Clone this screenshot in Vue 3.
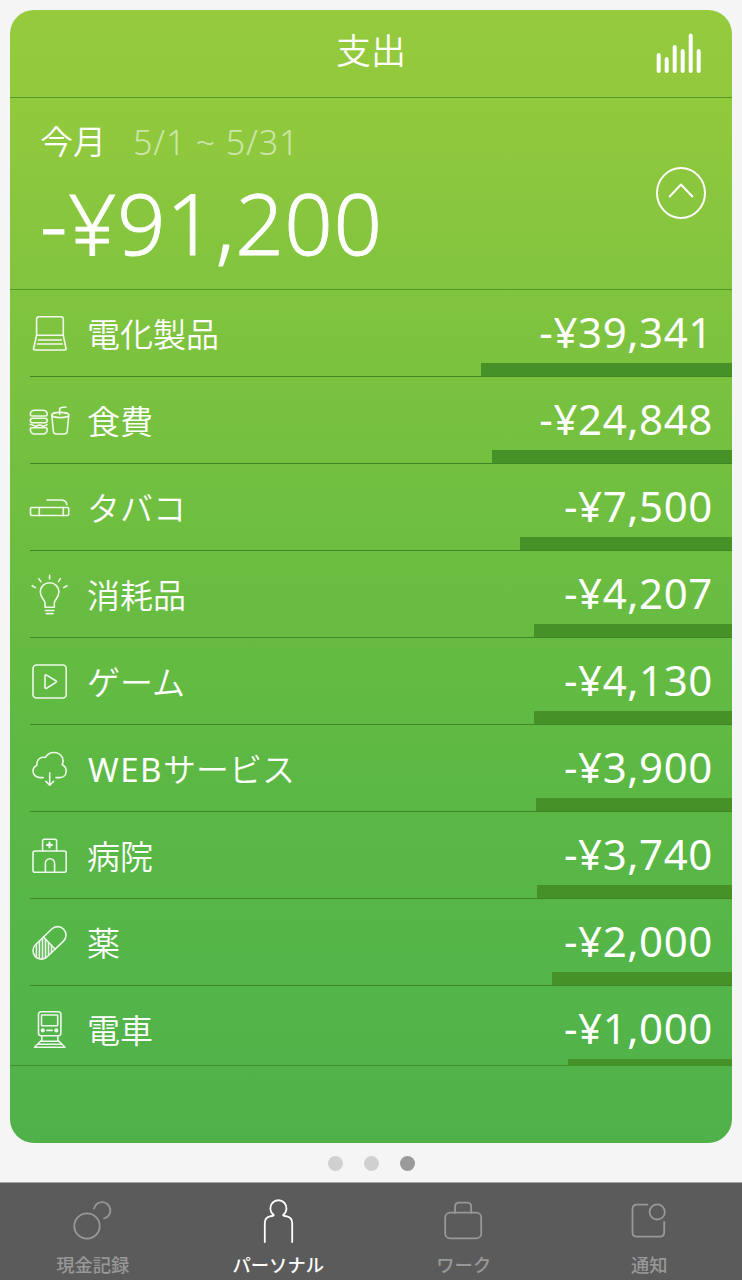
<script setup>
import { ref } from 'vue'

// bar は右端から伸びるバーの長さ(px)
const expenses = [
  { id: 'appliance', name: '電化製品', amount: 39341, bar: 251 },
  { id: 'food', name: '食費', amount: 24848, bar: 240 },
  { id: 'tobacco', name: 'タバコ', amount: 7500, bar: 212 },
  { id: 'supplies', name: '消耗品', amount: 4207, bar: 198 },
  { id: 'game', name: 'ゲーム', amount: 4130, bar: 198 },
  { id: 'web', latin: 'WEB', name: 'サービス', amount: 3900, bar: 196 },
  { id: 'hospital', name: '病院', amount: 3740, bar: 195 },
  { id: 'medicine', name: '薬', amount: 2000, bar: 180 },
  { id: 'train', name: '電車', amount: 1000, bar: 164 }
]

const tabs = [
  { id: 'cash', label: '現金記録' },
  { id: 'personal', label: 'パーソナル' },
  { id: 'work', label: 'ワーク' },
  { id: 'notice', label: '通知' }
]

const activeTab = ref('personal')
const activePage = ref(3)

function formatYen(value) {
  return '-¥' + value.toLocaleString('en-US')
}
</script>

<template>
  <div class="screen">
    <section class="card">
      <header class="card-header">
        <h1>支出</h1>
        <svg class="chart-icon" viewBox="0 0 46 42">
          <path d="M2.7 32V48M10.7 36V48M18.7 24V48M26.7 28V48M34.7 12.5V48M42.7 28V48" transform="translate(0 -10)" />
        </svg>
      </header>

      <div class="summary">
        <div class="summary-main">
          <div class="period">
            <span class="period-name">今月</span>
            <span class="period-range">5/1 ~ 5/31</span>
          </div>
          <div class="total">{{ formatYen(91200) }}</div>
        </div>
        <svg class="toggle-icon" viewBox="0 0 50 54">
          <ellipse cx="25" cy="27" rx="24" ry="25" />
          <path d="M13.7 30.5L25 18.5L36.3 30.5" />
        </svg>
      </div>

      <ul class="expense-list">
        <li v-for="item in expenses" :key="item.id" class="expense-item">
          <svg class="expense-icon" viewBox="0 0 44 44">
            <g v-if="item.id === 'appliance'">
              <path d="M8.6 24.3V8Q8.6 5.7 11 5.7H33Q35.3 5.7 35.3 8V24.3Z" />
              <path d="M8.6 24.3L5.6 37.5Q5.3 39 6.8 39H36.8Q38.3 39 38 37.5L35.3 24.3" />
              <path d="M10.5 29H33.2M9.5 33H34.3" />
            </g>
            <g v-else-if="item.id === 'food'">
              <path d="M4 18Q2.3 18 2.3 16.5Q2.3 12.3 7 12.3H14.5Q19.2 12.3 19.2 16.5Q19.2 18 17.5 18Z" />
              <rect x="2.3" y="20.2" width="16.9" height="4.6" rx="2.3" />
              <path d="M2.3 26.6Q4 26.2 5.5 27.5T9 27.7Q12 26.5 14 27.7T19 26.6" />
              <path d="M3.5 29.8H18Q19.2 29.8 19.2 31Q19.2 36 14.8 36H6.8Q2.3 36 2.3 31Q2.3 29.8 3.5 29.8Z" />
              <ellipse cx="32.3" cy="17" rx="8.5" ry="2.6" />
              <path d="M23.8 17L25.4 33.5Q25.7 36 28.5 36H36.2Q38.9 36 39.2 33.5L40.8 17" />
              <path d="M31.7 16.5V11.5Q31.7 9.5 33.7 9.5L38 9" />
            </g>
            <g v-else-if="item.id === 'tobacco'">
              <rect x="2.5" y="22.5" width="38.2" height="8" rx="1.2" />
              <path d="M11.3 22.5V30.5M35.3 22.5V30.5" />
              <path d="M19 15H32Q38.5 15 38.8 19.5" />
            </g>
            <g v-else-if="item.id === 'supplies'">
              <path d="M17 35.3V31C17 28 12.3 25.5 12.3 20A9.3 9.3 0 0 1 30.9 20C30.9 25.5 26.3 28 26.3 31V35.3Z" />
              <path d="M17.3 38.5H26M18.2 41.6H25" />
              <path d="M21.6 3.3V7M10.8 6.6L12.8 9.6M32.4 6.6L30.4 9.6M4.2 13.7L7.4 15.6M39 13.7L35.8 15.6" />
            </g>
            <g v-else-if="item.id === 'game'">
              <rect x="5" y="6" width="33.2" height="33" rx="3.5" />
              <path d="M17 17Q17 15.2 18.6 16.1L27.8 21.7Q29 22.5 27.8 23.4L18.6 29.2Q17 30 17 28.4Z" />
            </g>
            <g v-else-if="item.id === 'web'">
              <path d="M15.3 31.6H12C7.8 31.6 5 28.7 5 25Q5 21.2 8.9 19.2C8.3 14 12 10.4 17.3 11.5C19.5 8 22.5 6.4 26 6.5C33 6.7 36.8 12.5 34.2 18.7C37 20 38.2 22.3 38.2 25C38.2 29 35.5 31.6 31.8 31.6H28" />
              <path d="M21.7 26.8V39M17.9 35.4L21.7 39.2L25.5 35.4" />
            </g>
            <g v-else-if="item.id === 'hospital'">
              <rect x="5" y="18" width="33.2" height="21.2" rx="2" />
              <path d="M14.6 18V8Q14.6 6.3 16.3 6.3H26.9Q28.6 6.3 28.6 8V18" />
              <path d="M17.4 39V30.3A4.6 4.6 0 0 1 26.6 30.3V39" />
              <path class="bold" d="M21.5 9.5V14.5M19 12H24" />
            </g>
            <g v-else-if="item.id === 'medicine'">
              <rect x="1.8" y="14.5" width="39.4" height="16.8" rx="8.4" transform="rotate(-44 21.5 22.9)" />
              <path d="M15.4 17L27 29" />
              <path d="M8.4 24V36.8M11.4 21V38.5M14.5 18V39M17.5 19.2V38M20.5 22.3V35.3M23.5 25.4V32.4" />
            </g>
            <g v-else-if="item.id === 'train'">
              <rect x="10.5" y="4.8" width="22.4" height="24" rx="2.8" />
              <rect x="13.5" y="8" width="16.2" height="10.8" rx="0.6" />
              <path d="M18.8 23.4H24.3" />
              <circle class="solid" cx="14.8" cy="23.4" r="2.1" />
              <circle class="solid" cx="28.3" cy="23.4" r="2.1" />
              <path d="M13.8 29.5V33L6.5 40.2H37L29.8 33V29.5M13 34.3H30.5M10 37.3H33.5" />
            </g>
          </svg>
          <span class="expense-name"><span v-if="item.latin" class="latin">{{ item.latin }}</span>{{ item.name }}</span>
          <span class="expense-amount">{{ formatYen(item.amount) }}</span>
          <div class="expense-bar" :style="{ width: item.bar + 'px' }"></div>
        </li>
      </ul>
    </section>

    <div class="pager">
      <span v-for="n in 3" :key="n" :class="['dot', { active: n === activePage }]" @click="activePage = n"></span>
    </div>

    <nav class="tab-bar">
      <button
        v-for="tab in tabs"
        :key="tab.id"
        :class="['tab', { active: tab.id === activeTab }]"
        @click="activeTab = tab.id"
      >
        <svg class="tab-icon" viewBox="0 0 44 44">
          <g v-if="tab.id === 'cash'">
            <circle cx="16" cy="27" r="12.7" />
            <path d="M23 9.6A8.3 8.3 0 1 1 33.2 19.5" />
          </g>
          <path
            v-else-if="tab.id === 'personal'"
            d="M8.8 43V24Q8.8 18.5 14 17.3Q18.8 16.8 17.5 15.8A8.1 8.1 0 1 1 27.3 15.8Q26.2 16.8 30.8 17.3Q36.2 18.5 36.2 24V43"
          />
          <g v-else-if="tab.id === 'work'">
            <rect x="3.2" y="13.7" width="36" height="25.7" rx="5" />
            <path d="M13.1 13.7V7.8Q13.1 3.6 17.3 3.6H25Q29.2 3.6 29.2 7.8V13.7" />
          </g>
          <g v-else>
            <path d="M20.4 5.7H10Q5.5 5.7 5.5 10.2V33.2Q5.5 37.6 10 37.6H32.6Q37.2 37.6 37.2 33.2V22.8" />
            <circle cx="30.2" cy="12.9" r="7.6" />
          </g>
        </svg>
        <span class="tab-label">{{ tab.label }}</span>
      </button>
    </nav>
  </div>
</template>

<style>
body {
  margin: 0;
  background-color: #f5f5f5;
}
</style>

<style scoped>
.screen {
  width: 742px;
  height: 1280px;
  box-sizing: border-box;
  padding-top: 10px;
  display: flex;
  flex-direction: column;
  overflow: hidden;
  background-color: #f5f5f5;
  font-family: 'Noto Sans', 'Noto Sans CJK JP', sans-serif;
  color: #ffffff;
}

svg {
  display: block;
  flex-shrink: 0;
  fill: none;
  stroke: currentColor;
  stroke-linecap: round;
  stroke-linejoin: round;
}

.card {
  height: 1133px;
  margin: 0 10px;
  border-radius: 24px;
  overflow: hidden;
  flex-shrink: 0;
  background: linear-gradient(180deg, #95ca3d 0%, #91c93d 9%, #81c43f 25%, #6dbe40 47%, #5bb844 69%, #54b549 85%, #50b14a 100%);
}

.card-header {
  height: 87px;
  position: relative;
  display: flex;
  align-items: center;
  justify-content: center;
  border-bottom: 1px solid #559a2b;
}

.card-header h1 {
  margin: 0 0 5px;
  font-size: 35px;
  line-height: 50px;
  font-weight: 350;
}

.chart-icon {
  position: absolute;
  right: 30px;
  top: 23px;
  width: 46px;
  height: 42px;
  stroke-width: 4;
}

.summary {
  height: 171px;
  padding: 20px 26px 0 30px;
  display: flex;
  justify-content: space-between;
  border-bottom: 1px solid #4f962b;
}

.period {
  display: flex;
  align-items: center;
  height: 48px;
}

.period-name {
  font-size: 33px;
  line-height: 46px;
  font-weight: 350;
  margin-right: 27px;
}

.period-range {
  font-size: 34px;
  line-height: 46px;
  font-weight: 300;
  letter-spacing: 0.85px;
  opacity: 0.55;
}

.total {
  margin-top: 6px;
  font-size: 85px;
  line-height: 100px;
  font-weight: 300;
  white-space: nowrap;
  letter-spacing: 0.6px;
  -webkit-text-stroke: 0.8px currentColor;
}

.toggle-icon {
  width: 50px;
  height: 54px;
  margin-top: 48px;
  stroke-width: 2;
}

.expense-list {
  list-style: none;
  margin: 0;
  padding: 0;
  height: 775px;
  overflow: hidden;
  border-bottom: 1px solid #419129;
}

.expense-item {
  height: 87px;
  position: relative;
  display: flex;
  align-items: center;
  padding: 0 19px 0 18px;
}

.expense-item::after {
  content: '';
  position: absolute;
  left: 20px;
  right: 0;
  bottom: 0;
  height: 1px;
  background-color: #3f8526;
}

.expense-icon {
  width: 44px;
  height: 44px;
  margin-right: 15px;
  margin-bottom: 1px;
  stroke-width: 1.6;
  opacity: 0.9;
}

.expense-icon .bold {
  stroke-width: 2.2;
}

.expense-icon .solid {
  fill: currentColor;
  stroke: none;
}

.expense-name {
  flex: 1;
  margin-top: 2px;
  font-size: 33px;
  line-height: 48px;
  font-weight: 350;
}

.latin {
  margin-left: 1px;
  font-weight: 400;
  letter-spacing: 1.5px;
}

.expense-amount {
  margin-bottom: 3px;
  font-size: 42px;
  line-height: 50px;
  letter-spacing: 0.6px;
}

.expense-bar {
  position: absolute;
  right: 0;
  bottom: 0;
  height: 14px;
  background-color: #469128;
}

.pager {
  height: 41px;
  margin-bottom: -2px;
  display: flex;
  align-items: center;
  justify-content: center;
  gap: 21px;
  flex-shrink: 0;
}

.dot {
  width: 15px;
  height: 15px;
  border-radius: 50%;
  background-color: #d0d0d0;
}

.dot.active {
  background-color: #9a9a9a;
}

.tab-bar {
  flex: 1;
  display: flex;
  background-color: #5b5b5b;
  border-top: 1px solid #a3a3a3;
}

.tab {
  flex: 1;
  display: flex;
  flex-direction: column;
  align-items: center;
  padding: 16px 0 0;
  border: none;
  background: none;
  font-family: inherit;
  color: #989898;
  cursor: pointer;
}

.tab.active {
  color: #ffffff;
}

.tab-icon {
  width: 44px;
  height: 44px;
  stroke-width: 1.8;
}

.tab-label {
  margin-top: 8px;
  font-size: 18.3px;
  line-height: 27px;
  font-weight: 500;
}
</style>
